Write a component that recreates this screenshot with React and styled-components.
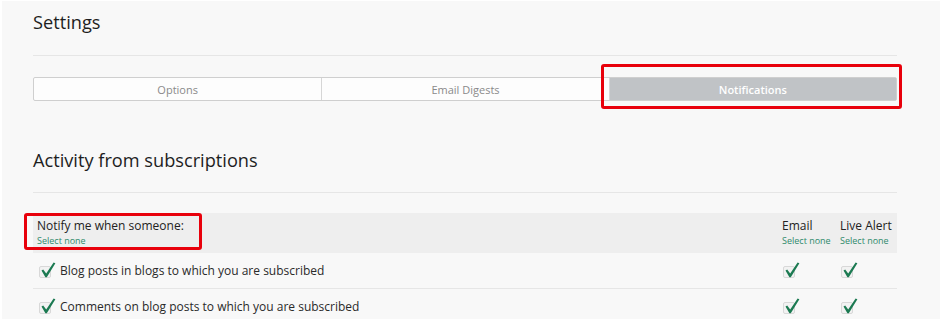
import React from 'react'
import styled, { createGlobalStyle } from 'styled-components'

const GlobalStyle = createGlobalStyle`
  html, body {
    margin: 0;
    padding: 0;
    background: #f8f8f8;
  }
  body {
    font-family: "Open Sans", "Noto Sans", sans-serif;
    color: #222;
    border-top: 1px solid #fff;
    border-left: 2px solid #fff;
  }
`

const CheckMark = () => (
  <svg width="15" height="16" viewBox="0 0 15 16">
    <path d="M0.5 8.6 L2.2 7.6 L5.2 11.4 L12.6 0.4 L14.4 1.2 L5.8 15.2 L4.4 15.2 Z" fill="#1c7a52" />
  </svg>
)

const Check = () => (
  <CheckBox>
    <CheckMark />
  </CheckBox>
)

const rows = [
  'Blog posts in blogs to which you are subscribed',
  'Comments on blog posts to which you are subscribed',
]

export default function App() {
  return (
    <Page>
      <GlobalStyle />
      <PageHeader>
        <Title>Settings</Title>
      </PageHeader>

      <Tabs>
        <Tab>Options</Tab>
        <Tab>Email Digests</Tab>
        <Tab active>
          Notifications
          <Highlight style={{ top: -14, left: -9, right: -6, bottom: -9 }} />
        </Tab>
      </Tabs>

      <SectionHeader>
        <SectionTitle>Activity from subscriptions</SectionTitle>
      </SectionHeader>

      <Table>
        <HeadRow>
          <HeadCell>
            <HeadLabel>Notify me when someone:</HeadLabel>
            <SelectNone>Select none</SelectNone>
            <Highlight style={{ top: -5, left: -13, width: 178, height: 37 }} />
          </HeadCell>
          <HeadCell>
            <HeadLabel>Email</HeadLabel>
            <SelectNone>Select none</SelectNone>
          </HeadCell>
          <HeadCell>
            <HeadLabel>Live Alert</HeadLabel>
            <SelectNone>Select none</SelectNone>
          </HeadCell>
        </HeadRow>

        {rows.map((label) => (
          <Row key={label}>
            <LabelCell>
              <Check />
              <span>{label}</span>
            </LabelCell>
            <BoxCell>
              <Check />
            </BoxCell>
            <BoxCell>
              <Check />
            </BoxCell>
          </Row>
        ))}
      </Table>
    </Page>
  )
}

const Page = styled.div`
  padding: 0 43px 0 31px;
  height: 318px;
  overflow: hidden;
`

const PageHeader = styled.div`
  height: 54px;
  border-bottom: 1px solid #e6e6e6;
`

const Title = styled.h1`
  margin: 0;
  padding-top: 7px;
  font-size: 18.2px;
  line-height: 28px;
  font-weight: 400;
  color: #1e1e1e;
`

const Tabs = styled.div`
  margin-top: 21px;
  display: grid;
  grid-template-columns: repeat(3, 1fr);
  height: 24px;
  border: 1px solid #cfcfcf;
  border-radius: 2px;
  box-sizing: border-box;
  background: #fdfdfd;
`

const Tab = styled.div`
  position: relative;
  display: flex;
  align-items: center;
  justify-content: center;
  font-size: 11px;
  color: ${(p) => (p.active ? '#fff' : '#8a8a8a')};
  font-weight: ${(p) => (p.active ? 600 : 400)};
  background: ${(p) => (p.active ? '#c0c3c6' : 'transparent')};
  & + & {
    border-left: 1px solid #d6d6d6;
  }
`

const Highlight = styled.span`
  position: absolute;
  box-sizing: border-box;
  border: 3px solid #e8000b;
  border-radius: 3px;
  pointer-events: none;
`

const SectionHeader = styled.div`
  margin-top: 45px;
  padding-bottom: 18px;
  border-bottom: 1px solid #e6e6e6;
`

const SectionTitle = styled.h2`
  margin: 0;
  font-size: 18.2px;
  line-height: 28px;
  font-weight: 400;
  color: #1e1e1e;
`

const Table = styled.div`
  margin-top: 20px;
`

const grid = `
  display: grid;
  grid-template-columns: 1fr 58px 57px;
`

const HeadRow = styled.div`
  ${grid}
  height: 40px;
  background: #eeeeee;
  box-sizing: border-box;
  padding: 5px 0 0 4px;
`

const HeadCell = styled.div`
  position: relative;
  display: flex;
  flex-direction: column;
`

const HeadLabel = styled.span`
  font-size: 12px;
  line-height: 16px;
  color: #222;
`

const SelectNone = styled.span`
  font-size: 9px;
  line-height: 13px;
  color: #2f8a6c;
`

const Row = styled.div`
  ${grid}
  height: 36px;
  align-items: center;
  border-bottom: 1px solid #e6e6e6;
  padding: 0 0 0 6px;
  box-sizing: border-box;
`

const LabelCell = styled.div`
  display: flex;
  align-items: center;
  gap: 9px;
  font-size: 12px;
  color: #2a2a2a;
`

const BoxCell = styled.div`
  display: flex;
  align-items: center;
  padding-left: 1px;
`

const CheckBox = styled.span`
  position: relative;
  display: inline-block;
  width: 12px;
  height: 12px;
  border: 1px solid #d8d8d8;
  border-radius: 2px;
  background: #f2f2f2;
  box-sizing: border-box;
  flex: none;
  margin-top: 3px;

  svg {
    position: absolute;
    left: 1px;
    top: -5px;
  }
`
